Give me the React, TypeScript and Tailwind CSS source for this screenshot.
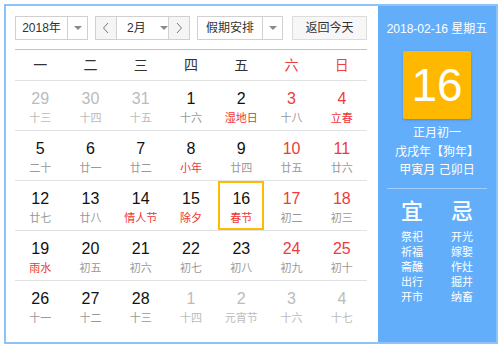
import React from 'react';

type Day = { n: number; l: string; other?: boolean; redN?: boolean; redL?: boolean; sel?: boolean };

const weeks: Day[][] = [
  [
    { n: 29, l: '十三', other: true },
    { n: 30, l: '十四', other: true },
    { n: 31, l: '十五', other: true },
    { n: 1, l: '十六' },
    { n: 2, l: '湿地日', redL: true },
    { n: 3, l: '十八', redN: true },
    { n: 4, l: '立春', redN: true, redL: true },
  ],
  [
    { n: 5, l: '二十' },
    { n: 6, l: '廿一' },
    { n: 7, l: '廿二' },
    { n: 8, l: '小年', redL: true },
    { n: 9, l: '廿四' },
    { n: 10, l: '廿五', redN: true },
    { n: 11, l: '廿六', redN: true },
  ],
  [
    { n: 12, l: '廿七' },
    { n: 13, l: '廿八' },
    { n: 14, l: '情人节', redL: true },
    { n: 15, l: '除夕', redL: true },
    { n: 16, l: '春节', redL: true, sel: true },
    { n: 17, l: '初二', redN: true },
    { n: 18, l: '初三', redN: true },
  ],
  [
    { n: 19, l: '雨水', redL: true },
    { n: 20, l: '初五' },
    { n: 21, l: '初六' },
    { n: 22, l: '初七' },
    { n: 23, l: '初八' },
    { n: 24, l: '初九', redN: true },
    { n: 25, l: '初十', redN: true },
  ],
  [
    { n: 26, l: '十一' },
    { n: 27, l: '十二' },
    { n: 28, l: '十三' },
    { n: 1, l: '十四', other: true },
    { n: 2, l: '元宵节', other: true },
    { n: 3, l: '十六', other: true },
    { n: 4, l: '十七', other: true },
  ],
];

const weekdays = ['一', '二', '三', '四', '五', '六', '日'];
const yi = ['祭祀', '祈福', '斋醮', '出行', '开市'];
const ji = ['开光', '嫁娶', '作灶', '掘井', '纳畜'];

function Caret() {
  return <span className="w-0 h-0 border-l-[4px] border-r-[4px] border-t-[4px] border-l-transparent border-r-transparent border-t-[#8a8a8a]" />;
}

function Chevron({ dir }: { dir: 'l' | 'r' }) {
  return (
    <svg width="8" height="12" viewBox="0 0 8 12" fill="none" stroke="#777" strokeWidth="1">
      {dir === 'l' ? <polyline points="6,1 1.5,6 6,11" /> : <polyline points="2,1 6.5,6 2,11" />}
    </svg>
  );
}

export default function App() {
  return (
    <div
      className="w-[500px] h-[345px] bg-white pt-[4px] pl-[4px]"
      style={{ fontFamily: '"Liberation Sans", Arial, "Noto Sans CJK SC", sans-serif' }}
    >
      <div className="w-[494px] h-[340px] border-2 border-[#8ec3fa] flex">
        {/* Calendar grid */}
        <div className="w-[372px] pl-[9px] pr-[11px] pt-[10px]">
          <div className="flex h-[24px] text-[12px] text-[#333]">
            <div className="w-[73px] border border-[#d0d0d0] flex">
              <div className="w-[51px] flex items-center justify-center">2018年</div>
              <div className="flex-1 border-l border-[#d0d0d0] flex items-center justify-center">
                <Caret />
              </div>
            </div>
            <div className="w-[95px] ml-[7px] border border-[#d0d0d0] flex">
              <div className="w-[21px] bg-[#f5f5f5] border-r border-[#d0d0d0] flex items-center justify-center">
                <Chevron dir="l" />
              </div>
              <div className="flex-1 flex items-center pl-[10px]">
                <span>2月</span>
                <span className="ml-[14px] flex"><Caret /></span>
              </div>
              <div className="w-[21px] bg-[#f5f5f5] border-l border-[#d0d0d0] flex items-center justify-center">
                <Chevron dir="r" />
              </div>
            </div>
            <div className="w-[86px] ml-[7px] border border-[#d0d0d0] flex">
              <div className="w-[64px] flex items-center justify-center">假期安排</div>
              <div className="flex-1 border-l border-[#d0d0d0] flex items-center justify-center">
                <Caret />
              </div>
            </div>
            <div className="w-[75px] ml-[9px] border border-[#dcdcdc] bg-[#f7f7f7] flex items-center justify-center">
              返回今天
            </div>
          </div>

          <div className="mt-[9px] border-t border-[#9fcbf8]" />
          <div className="grid grid-cols-7 h-[31px] border-b border-[#e2e2e2] text-[14px] items-center text-center">
            {weekdays.map((w, i) => (
              <div key={w} className={i >= 5 ? 'text-[#ee4040]' : 'text-[#333]'}>
                {w}
              </div>
            ))}
          </div>

          {weeks.map((week, wi) => (
            <div
              key={wi}
              className={`grid grid-cols-7 h-[50px] ${wi < weeks.length - 1 ? 'border-b border-[#e2e2e2]' : ''}`}
            >
              {week.map((d, di) => {
                const numColor = d.other ? 'text-[#bbbbbb]' : d.redN ? 'text-[#f03a3a]' : 'text-[#111]';
                const lunColor = d.other ? 'text-[#bbbbbb]' : d.redL ? 'text-[#ee3535]' : 'text-[#999]';
                return (
                  <div
                    key={di}
                    className={`mx-[2px] border-2 flex flex-col items-center pt-[7px] ${
                      d.sel ? 'border-[#ffbb00]' : 'border-transparent'
                    }`}
                  >
                    <span className={`text-[16px] leading-[18px] ${numColor}`}>{d.n}</span>
                    <span className={`text-[11px] leading-[16px] mt-[2px] ${lunColor}`}>{d.l}</span>
                  </div>
                );
              })}
            </div>
          ))}
        </div>

        {/* Side panel */}
        <div className="flex-1 bg-[#63aefb] text-white flex flex-col items-center pt-[15px]">
          <div className="text-[12px] leading-[16px]">2018-02-16 星期五</div>
          <div className="mt-[14px] w-[68px] h-[68px] bg-[#ffb800] rounded-[2px] shadow-[0_1px_3px_rgba(0,0,0,0.2)] flex items-center justify-center text-[46px] leading-none">
            16
          </div>
          <div className="mt-[5px] text-[12px] leading-[18.5px] text-center">
            <div>正月初一</div>
            <div>戊戌年【狗年】</div>
            <div>甲寅月 己卯日</div>
          </div>
          <div className="mt-[8px] w-[100px] border-t border-[#a3cffc]" />
          <div className="mt-[9px] grid grid-cols-2 w-[100px] text-center">
            <div className="text-[22px] leading-[28px] font-medium">宜</div>
            <div className="text-[22px] leading-[28px] font-medium">忌</div>
            <div className="mt-[4px] text-[11px] leading-[15px]">
              {yi.map((t) => (
                <div key={t}>{t}</div>
              ))}
            </div>
            <div className="mt-[4px] text-[11px] leading-[15px]">
              {ji.map((t) => (
                <div key={t}>{t}</div>
              ))}
            </div>
          </div>
        </div>
      </div>
    </div>
  );
}
